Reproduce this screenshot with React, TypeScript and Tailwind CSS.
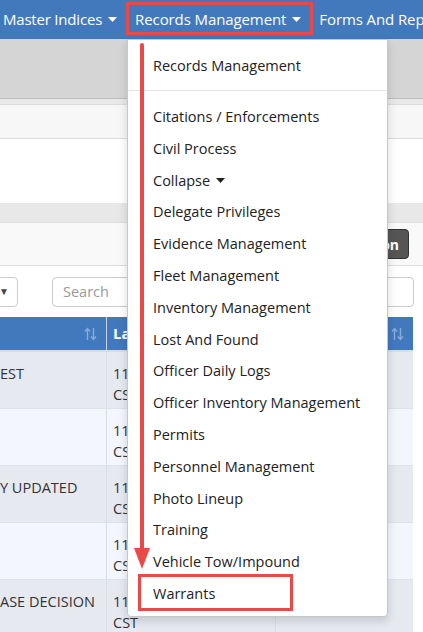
import React from "react";

const menuItems = [
  "Citations / Enforcements",
  "Civil Process",
  "Collapse",
  "Delegate Privileges",
  "Evidence Management",
  "Fleet Management",
  "Inventory Management",
  "Lost And Found",
  "Officer Daily Logs",
  "Officer Inventory Management",
  "Permits",
  "Personnel Management",
  "Photo Lineup",
  "Training",
  "Vehicle Tow/Impound",
  "Warrants",
];

const rows = [
  { a: "EST", bg: "bg-[#e6e9f0]" },
  { a: "", bg: "bg-[#f3f7fd]" },
  { a: "Y UPDATED", bg: "bg-[#e6e9f0]" },
  { a: "", bg: "bg-[#f3f7fd]" },
  { a: "ASE DECISION", bg: "bg-[#e6e9f0]" },
];

function Caret() {
  return (
    <svg width="9" height="5" viewBox="0 0 9 5" className="ml-[6px] inline-block">
      <path d="M0 0 H9 L4.5 5 Z" fill="currentColor" />
    </svg>
  );
}

function SortIcon() {
  return (
    <svg width="13" height="14" viewBox="0 0 13 14" className="text-[#86acd9]">
      <path d="M3.5 13 V2 M1 4.5 L3.5 1.5 L6 4.5" stroke="currentColor" strokeWidth="1.4" fill="none" />
      <path d="M9.5 1 V12 M7 9.5 L9.5 12.5 L12 9.5" stroke="currentColor" strokeWidth="1.4" fill="none" />
    </svg>
  );
}

export default function App() {
  return (
    <div
      className="relative h-[632px] w-[423px] overflow-hidden bg-white text-[#333]"
      style={{ fontFamily: '"Open Sans", "Liberation Sans", sans-serif' }}
    >
      {/* Top nav */}
      <nav className="flex h-[39px] items-center gap-[18px] overflow-hidden whitespace-nowrap bg-[#4279bd] pl-[3px] text-[15px] text-white">
        <span className="flex items-center tracking-[-0.2px]">
          Master Indices
          <Caret />
        </span>
        <span className="flex items-center tracking-[-0.1px]">
          Records Management
          <Caret />
        </span>
        <span className="tracking-[-0.1px]">Forms And Rep</span>
      </nav>

      {/* Page body */}
      <div className="h-[60px] border-b border-[#bcbcbc] bg-[#d5d5d5]" />
      <div className="h-[5px] bg-[#e9e9e9]" />
      <div className="h-[35px] border-y border-[#dcdcdc] bg-[#f7f7f7]" />
      <div className="h-[64px] bg-white" />
      <div className="h-[19px] bg-[#e8e8e8]" />
      <div className="flex h-[44px] items-center justify-end border-y border-[#dcdcdc] bg-[#f9f9f9] pr-[14px]">
        <button className="h-[30px] w-[60px] rounded-[4px] border border-[#333] bg-[#555] pr-[9px] text-right text-[14px] font-bold text-white">
          on
        </button>
      </div>
      <div className="flex h-[51px] items-center gap-[34px]">
        <div className="-ml-[40px] flex h-[30px] w-[58px] items-center justify-end rounded-[4px] border border-[#ccc] pr-[8px] text-[10px] text-[#444]">
          ▼
        </div>
        <div className="flex h-[30px] w-[362px] items-center rounded-[4px] border border-[#ccc] pl-[10px] text-[14.5px] text-[#999]">
          Search
        </div>
      </div>

      {/* Table */}
      <div className="w-[413px]">
        <div className="flex h-[35px] border-b-2 border-[#d7dde6] bg-[#4279bd] text-[15px] font-bold text-white">
          <div className="flex w-[107px] items-center justify-end border-r border-[#c5d5ea] pr-[9px]">
            <SortIcon />
          </div>
          <div className="flex flex-1 items-center justify-between pl-[6px] pr-[9px]">
            <span>La</span>
            <SortIcon />
          </div>
        </div>
        {rows.map((r, i) => (
          <div key={i} className={`flex h-[57px] border-b border-[#dde1e8] text-[14.5px] leading-[21px] ${r.bg}`}>
            <div className="w-[107px] border-r border-[#d9dde5] pt-[11px]">{r.a}</div>
            <div className="w-[169px] border-r border-[#d9dde5] pl-[6px] pt-[11px]">
              <div>11</div>
              <div>CST</div>
            </div>
            <div className="flex-1" />
          </div>
        ))}
      </div>

      {/* Dropdown menu */}
      <div className="absolute left-[127px] top-[39px] h-[578px] w-[261px] rounded-b-[4px] border border-[#c8c8c8] bg-white pt-[10px] text-[14.5px] text-[#222] shadow-[0_4px_10px_rgba(0,0,0,0.15)]">
        <div className="flex h-[32px] items-center pl-[25px]">Records Management</div>
        <div className="mb-[10px] mt-[8px] h-px bg-[#e5e5e5]" />
        {menuItems.map((m) => (
          <div key={m} className="flex h-[31.8px] items-center pl-[25px]">
            {m}
            {m === "Collapse" && <Caret />}
          </div>
        ))}
      </div>

      {/* Annotations */}
      <div className="absolute left-[126px] top-[2px] h-[33px] w-[187px] border-[3px] border-[#e84a4a]" />
      <div className="absolute left-[138px] top-[574px] h-[37px] w-[155px] border-[3px] border-[#e84a4a]" />
      <div className="absolute left-[140px] top-[43px] h-[508px] w-[4px] rounded-t-[2px] bg-[#e84a4a]" />
      <svg className="absolute left-[134px] top-[548px]" width="16" height="21" viewBox="0 0 16 21">
        <path d="M0 0 H16 L8 21 Z" fill="#e84a4a" />
      </svg>
    </div>
  );
}
